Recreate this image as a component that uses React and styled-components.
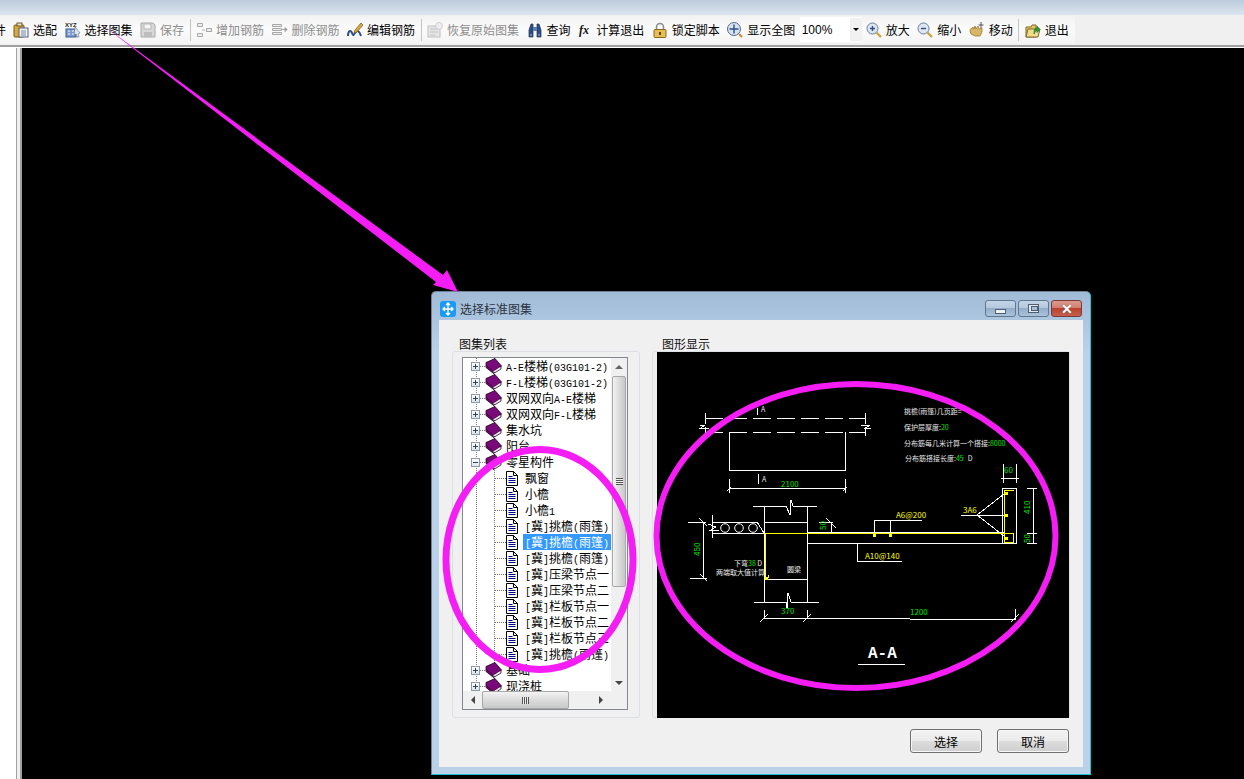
import React from 'react';
import styled, { createGlobalStyle } from 'styled-components';

const GlobalStyle = createGlobalStyle`
html, body {
 margin:0;
 padding:0;
 background:#000;
}
* {
 box-sizing:border-box;
}
`;

const cjk = `"Noto Sans CJK SC", "Liberation Sans", sans-serif`;

const Page = styled.div`
width:1244px;
height:779px;
position:relative;
overflow:hidden;
display:flex;
flex-direction:column;
font-family:${cjk};
font-size:12px;
color:#000;
background:#f0f0f0;
`;
const TopStrip = styled.div`
height:15px;
flex:none;
background:linear-gradient(#bccbdc,#dbe5ef);
`;
const ToolRow = styled.div`
height:30px;
flex:none;
background:#f0f0f0;
`;
const Toolbar = styled.div`
width:1075px;
height:29px;
padding-left:9px;
display:flex;
align-items:center;
overflow:hidden;
background:linear-gradient(#f1f1f1,#fbfbfb 45%,#f4f4f4);
`;
const CutText = styled.span`
margin:0 3px 0 -15px;
width:12px;
flex:none;
line-height:16px;
`;
const ToolButton = styled.div`
display:flex;
align-items:center;
flex:none;
height:24px;
padding:0 3.5px 0 4px;
color:${p => (p.$off ? '#8d8d8d' : '#000')};
white-space:nowrap;
`;
const ToolIcon = styled.svg`
width:16px;
height:16px;
margin-right:${p => (p.$tight ? 2 : 4)}px;
flex:none;
`;
const ToolSep = styled.div`
width:1px;
height:22px;
margin:0 1.5px 0 2px;
background:#c4c4c4;
flex:none;
`;
const Combo = styled.div`
width:62px;
height:25px;
margin:0 0 0 1px;
padding-left:2px;
display:flex;
align-items:center;
justify-content:space-between;
background:#fff;
flex:none;
font-family:"Liberation Sans", sans-serif;
`;
const ComboArrow = styled.div`
width:12px;
height:23px;
background:#f1f1f1;
display:flex;
align-items:center;
justify-content:center;
&::after {
 content:'';
 border-left:3px solid transparent;
 border-right:3px solid transparent;
 border-top:3px solid #000;
}
`;
const ToolRule = styled.div`
height:3px;
flex:none;
background:linear-gradient(#a0a0a0 0 2px,#fff 2px);
`;
const Workspace = styled.div`
flex:1;
display:flex;
background:#f0f0f0;
`;
const SidePane = styled.div`
width:17px;
background:#fff;
border-right:1px solid #a0a0a0;
`;
const CadArea = styled.div`
flex:1;
margin-left:3px;
background:#000;
border-left:2px solid #a0a0a0;
`;

const Dialog = styled.div`
position:absolute;
left:431px;
top:291px;
width:660px;
height:484px;
padding:0 7px 7px;
display:flex;
flex-direction:column;
border-radius:5px 5px 0 0;
background:linear-gradient(#a1bbd7,#b9d2ea 60px);
border:1px solid #6d8297;
border-right-color:#19c4d6;
border-bottom-color:#19c4d6;
`;
const TitleBar = styled.div`
height:28px;
flex:none;
margin-left:1px;
padding:5px 1px 0 0;
display:flex;
align-items:center;
`;
const TitleIcon = styled.svg`
width:16px;
height:16px;
margin-right:4px;
`;
const TitleText = styled.span`
flex:1;
color:#2c3440;
line-height:16px;
`;
const WinButton = styled.div`
width:31px;
height:17px;
margin-left:2px;
border:1px solid ${p => (p.$close ? '#7a3a3a' : '#62768c')};
border-radius:3px;
display:flex;
align-items:center;
justify-content:center;
background:${p => (p.$close
  ? 'linear-gradient(#dd9a8d,#d07f71 45%,#b9402e 50%,#c4604c)'
  : 'linear-gradient(#c3d5e8,#b5c9de 45%,#94aec9 50%,#aac3dc)')};
`;
const MinGlyph = styled.div`
width:11px;
height:5px;
margin-top:5px;
background:#eef3f8;
border:1px solid #4e5f72;
`;
const MaxGlyph = styled.div`
width:11px;
height:9px;
background:#dfe8f1;
border:1px solid #4e5f72;
&::after {
 content:'';
 display:block;
 width:5px;
 height:3px;
 margin:1px 2px;
 background:#a9bfd6;
 border:1px solid #4e5f72;
}
`;
const CloseGlyph = styled.span`
color:#fff;
font:bold 14px/14px "Liberation Sans", sans-serif;
text-shadow:0 0 1px #444;
`;
const DialogBody = styled.div`
flex:1;
padding:31px 14px 0 13px;
display:flex;
flex-direction:column;
background:#f0f0f0;
`;
const Panels = styled.div`
display:flex;
gap:12px;
height:367px;
flex:none;
`;
const Group = styled.div`
position:relative;
width:${p => p.$w}px;
flex:none;
padding:${p => p.$pad};
border:1px solid #dcdfe4;
border-radius:3px;
`;
const Legend = styled.span`
position:absolute;
left:${p => p.$left}px;
top:-16px;
line-height:16px;
padding:0 1px;
color:#111;
`;
const TreeBox = styled.div`
width:166px;
height:353px;
display:grid;
grid-template-columns:148px 16px;
grid-template-rows:333px 18px;
border:1px solid #828790;
background:#fff;
`;
const TreeList = styled.div`
overflow:hidden;
background-image:
 linear-gradient(#777 50%,transparent 50%),
 linear-gradient(#777 50%,transparent 50%);
background-size:1px 2px, 1px 2px;
background-repeat:repeat-y, repeat-y;
background-position:13px 0, 31px 0;
`;
const TreeRow = styled.div`
height:16px;
display:flex;
align-items:center;
padding-left:${p => (p.$child ? 31 : 8)}px;
white-space:nowrap;
line-height:16px;
`;
const Expander = styled.span`
width:9px;
height:9px;
flex:none;
position:relative;
border:1px solid #8e9aa8;
background:linear-gradient(#fff,#dfe3ea);
&::before {
 content:'';
 position:absolute;
 left:1px;
 top:3px;
 width:5px;
 height:1px;
 background:#2a3f7a;
}
&::after {
 content:'';
 display:${p => (p.$open ? 'none' : 'block')};
 position:absolute;
 left:3px;
 top:1px;
 width:1px;
 height:5px;
 background:#2a3f7a;
}
`;
const Dots = styled.span`
width:${p => p.$w}px;
flex:none;
border-bottom:1px dotted #777;
`;
const Label = styled.span`
margin-left:${p => p.$gap}px;
padding:0 2px;
height:16px;
color:${p => (p.$on ? '#fff' : '#000')};
background:${p => (p.$on ? '#3399ff' : 'transparent')};
`;
const Latin = styled.span`
font-family:"Liberation Mono", monospace;
font-size:10px;
`;
const VScroll = styled.div`
display:flex;
flex-direction:column;
background:#f0f0f0;
`;
const HScroll = styled.div`
display:flex;
align-items:center;
padding-right:1px;
background:#f0f0f0;
`;
const ScrollCorner = styled.div`
background:#f0f0f0;
`;
const ScrollEnd = styled.div`
flex:none;
width:${p => (p.$w ? `${p.$w}px` : '100%')};
height:${p => (p.$w ? '100%' : '17px')};
display:flex;
align-items:center;
justify-content:center;
`;
const Thumb = styled.div`
flex:none;
background:linear-gradient(${p => (p.$h ? 'to bottom' : 'to right')},#f2f2f2,#dcdcdc 50%,#c8c8c8);
border:1px solid #a8a8a8;
border-radius:2px;
display:flex;
align-items:center;
justify-content:center;
${p => (p.$h ? 'width:87px;height:100%;' : 'height:211px;margin:1px 1px 0;')}
`;
const Grip = styled.div`
width:7px;
height:7px;
background:${p => (p.$h
  ? 'repeating-linear-gradient(to right,#555 0 1px,#eee 1px 2px)'
  : 'repeating-linear-gradient(to bottom,#555 0 1px,#eee 1px 2px)')};
`;
const TrackFill = styled.div`
flex:1;
`;
const Arrow = styled.span`
width:0;
height:0;
${p => p.$dir === 'up' && 'border-left:4px solid transparent;border-right:4px solid transparent;border-bottom:4px solid #666;'}
${p => p.$dir === 'down' && 'border-left:4px solid transparent;border-right:4px solid transparent;border-top:4px solid #444;'}
${p => p.$dir === 'left' && 'border-top:4px solid transparent;border-bottom:4px solid transparent;border-right:4px solid #444;'}
${p => p.$dir === 'right' && 'border-top:4px solid transparent;border-bottom:4px solid transparent;border-left:4px solid #444;'}
`;
const CadCanvas = styled.svg`
display:block;
width:412px;
height:366px;
background:#000;
`;
const CadText = styled.text`
font-family:${cjk};
font-size:${p => p.$size || 7}px;
fill:${p => p.$fill || '#e8e8e8'};
`;
const CadTitle = styled.text`
font-family:"Liberation Mono", monospace;
font-weight:bold;
font-size:16px;
fill:#fff;
`;
const Footer = styled.div`
display:flex;
justify-content:flex-end;
gap:15px;
margin-top:11px;
`;
const PushButton = styled.div`
width:72px;
height:24px;
border:1px solid #707070;
border-radius:3px;
display:flex;
align-items:center;
justify-content:center;
background:linear-gradient(#f3f3f3,#ebebeb 50%,#dcdcdc 52%,#cfcfcf);
box-shadow:inset 0 0 0 1px #f6f6f6;
`;
const Overlay = styled.svg`
position:absolute;
left:0;
top:0;
width:1244px;
height:779px;
pointer-events:none;
`;

const icons = {
 clip: <><rect x="1" y="3" width="10" height="12" rx="1" fill="#d9a83a" stroke="#7a5a16" /><rect x="4" y="1" width="5" height="3" fill="#e8e2c8" stroke="#6b5a2a" /><rect x="6" y="6" width="9" height="9" fill="#eef1f6" stroke="#52627e" /><path d="M8 9h5M8 11h5M8 13h5" stroke="#7d8aa3" /></>,
 xyz: <><text x="0" y="5" fontSize="6" fontWeight="bold" fontFamily="Liberation Sans" fill="#222">XYZ</text><rect x="1" y="7" width="10" height="8" fill="#7f9ed0" stroke="#3c5a8c" /><path d="M3 9h2M7 9h2M3 12h2M7 12h2" stroke="#fff" /><path d="M10 5l5 6-2 1 1 3-2 0-1-3-2 1z" fill="#dfe7f2" stroke="#5a6a80" strokeWidth=".6" /></>,
 save: <><path d="M1 1h12l2 2v12H1z" fill="#d8d8d8" stroke="#a8a8a8" /><rect x="4" y="2" width="7" height="5" fill="#f4f4f4" stroke="#b8b8b8" /><rect x="4" y="10" width="8" height="5" fill="#bdbdbd" /></>,
 add: <g stroke="#a8a8a8" fill="#eee"><path d="M1.500 1.500h5v3h-5zM1.500 11.500h5v3h-5z" /><path d="M6 8h3" /><rect x="10.500" y="6.500" width="5" height="3" /></g>,
 del: <g stroke="#a8a8a8" fill="#eee"><path d="M.5 2.500h9v2h-9zM.5 6.500h9v2h-9zM.5 10.500h9v2h-9z" /><path d="M10 7.500h5" /><path d="M15 7.500l-2-2v4z" fill="#888" /></g>,
 edit: <><path d="M1 14c0-6 3-6 4-3s1 3 3 0 4-3 6 3" fill="none" stroke="#2d4f8a" strokeWidth="2" /><path d="M8 8l6-7 2 2-6 7-3 1z" fill="#d9a83a" stroke="#6f5a20" strokeWidth=".7" /></>,
 restore: <><rect x="1" y="4" width="12" height="11" fill="#e6e6e6" stroke="#c0c0c0" /><path d="M3 7h8M3 10h8M3 13h5" stroke="#c4c4c4" /><circle cx="12" cy="4" r="3.500" fill="#ededed" stroke="#cfcfcf" /></>,
 binoc: <><path d="M2 15V8l2-6h2v13zM14 15V8l-2-6h-2v13z" fill="#2f4d86" stroke="#1f3358" strokeWidth=".7" /><rect x="6" y="5" width="4" height="4" fill="#5d7fb8" /><path d="M3 13h2M11 13h2" stroke="#a9c2e6" /></>,
 fx: <text x="1" y="12" fontSize="12" fontStyle="italic" fontWeight="bold" fontFamily="Liberation Serif" fill="#111">fx</text>,
 lock: <><path d="M4.500 8V5a3.500 3.500 0 0 1 7 0v3" fill="none" stroke="#8c8c8c" strokeWidth="1.600" /><rect x="2" y="7.500" width="12" height="8" rx="1" fill="#e7bd55" stroke="#8a6a1e" /><rect x="7" y="10" width="2" height="3" fill="#5f4710" /></>,
 zoomAll: <><circle cx="7" cy="7" r="6.500" fill="#d6e2f2" stroke="#566a8c" /><path d="M7 2.500v9M2.500 7h9" stroke="#2d4f8a" strokeWidth="1.400" /><path d="M12 12l3 3" stroke="#c9882a" strokeWidth="2" /></>,
 zoomIn: <><circle cx="6.500" cy="6.500" r="5.500" fill="#dce6f2" stroke="#6a7c98" /><path d="M4 6.500h5M6.500 4v5" stroke="#33507f" strokeWidth="1.400" /><path d="M10.500 10.500l4.500 4.500" stroke="#c9a03a" strokeWidth="2.200" /></>,
 zoomOut: <><circle cx="6.500" cy="6.500" r="5.500" fill="#dce6f2" stroke="#6a7c98" /><path d="M4 6.500h5" stroke="#33507f" strokeWidth="1.400" /><path d="M10.500 10.500l4.500 4.500" stroke="#c9a03a" strokeWidth="2.200" /></>,
 hand: <><path d="M1 9c0-2 1-3 2-2l1-2 1 2 1-3 1 3 2-3 1 3 3-1v4l-2 4H6L2 12z" fill="#d8b668" stroke="#9a7a38" strokeWidth=".8" /><path d="M12 0v6M9.500 3h5" stroke="#555" /></>,
 exit: <><path d="M1 5h5l1-2h4v12H1z" fill="#e5c860" stroke="#80662a" /><path d="M1 15l2-8h12l-2 8z" fill="#f1de8c" stroke="#80662a" /><path d="M9 12c0-5 1-6 3-6V4l3 3.500-3 3V8.500c-1 0-2 1-3 3.500z" fill="#2f9a3a" stroke="#1d6a25" strokeWidth=".6" /></>,
};

const Tool = ({ icon, off, tight, children }) => (
 <ToolButton $off={off}>
  <ToolIcon viewBox="0 0 16 16" $tight={tight}>{icons[icon]}</ToolIcon>
  {children}
 </ToolButton>
);

const BookIcon = () => (
 <svg width="17" height="16" viewBox="0 0 17 16" style={{ flex: 'none' }}>
  <path d="M1 4.500L10 .5l6.500 7.500-8 5.500v2L1 9.500z" fill="#7a0a7a" stroke="#1c061c" strokeWidth=".8" />
  <path d="M1.500 8l7 5.500 7.500-5" fill="none" stroke="#2c0a2c" strokeWidth=".8" />
  <path d="M8.500 14l7-4.500" stroke="#e8e8e8" strokeWidth="1.200" />
  <path d="M8.500 15.500l7.500-4.500v-3" fill="none" stroke="#1c061c" strokeWidth=".8" />
 </svg>
);

const DocIcon = () => (
 <svg width="12" height="15" viewBox="0 0 12 15" style={{ flex: 'none' }}>
  <path d="M.5.500h7l4 4v10H.5z" fill="#fff" stroke="#000" />
  <path d="M7.500.500v4h4" fill="none" stroke="#000" />
  <path d="M2.500 5.500h4M2.500 7.500h7M2.500 9.500h7M2.500 11.500h7" stroke="#000080" />
 </svg>
);

// half width characters get the mono font, the rest stays on the CJK font
const Mixed = ({ text }) => text.split(/([\x20-\x7e]+)/).map((part, i) =>
 i % 2 ? <Latin key={i}>{part}</Latin> : part
);

const roots = ['A-E楼梯(03G101-2)', 'F-L楼梯(03G101-2)', '双网双向A-E楼梯', '双网双向F-L楼梯', '集水坑', '阳台'];
const parts = [
 '飘窗', '小檐', '小檐1', '[冀]挑檐(雨篷)', '[冀]挑檐(雨篷)', '[冀]挑檐(雨篷)', '[冀]压梁节点一', '[冀]压梁节点二',
 '[冀]栏板节点一', '[冀]栏板节点二', '[冀]栏板节点三', '[冀]挑檐(雨篷)',
];

const RootRow = ({ text, open }) => (
 <TreeRow>
  <Expander $open={open} />
  <Dots $w={5} />
  <BookIcon />
  <Label $gap={2}><Mixed text={text} /></Label>
 </TreeRow>
);

const white = [
 'M705 418h160M705 432h160',
 'M705 413v11M705 427v9M865 413v11M865 427v9',
 'M700 425h5l-4 3h8M861 425h9l-4 3h5',
 'M729 432v38h116v-38',
 'M757 408v7M758 474v10',
 'M729 488h116M729 479v14M845 479v14M727 491l4-4M843 491l4-4',
 'M753 506h33l4 9 1-15 2 6h24',
 'M764 506v96M807 506v96',
 'M764 522h43M765 579h42',
 'M754 602h32l1 6 1-15 3 9h28',
 'M713 522h44M713 533h51M712 515v23M708 524l8 3-5 3 8 0M757 522l7 11',
 'M688 522h18M703 522v56M690 578h17M699 518l8 8M700 574l7 7',
 'M819 522h14M831 522v12M826 518l10 10',
 'M807 532h198M807 543h209',
 'M857 543v18h45',
 'M874 520h48M874 520v13M890 520v13',
 'M1002 488h14v55h-14z',
 'M961 515h16M977 515l27-21M977 515h27M977 515l27 21',
 'M1003 464v19M1016 464v19M1001 478h18',
 'M1033 488v55M1027 488h10M1027 533h10M1027 543h10',
 'M764 618h146M910 619h105M764 610v9M807 610v9M1015 609v11M760 622l8-8M803 622l8-8M1011 622l8-8',
 'M858 664h47',
];
const yellow = [
 'M765 533h239M765 533v44M1004 533V490h10',
 'M1004 533h9v9h-9z',
 'M765 577h3v-2',
];
const dots = [[874, 535], [890, 535], [1006, 493], [1006, 515], [1006, 538], [766, 578]];
const rings = [725, 739, 753];

const CadDrawing = () => (
 <CadCanvas viewBox="657 352 412 366">
  <g fill="none" stroke="#fff" strokeWidth="1" shapeRendering="crispEdges">
   {white.map((d, i) => <path key={i} d={d} strokeDasharray={i === 0 ? '18 6' : undefined} />)}
  </g>
  <g fill="none" stroke="#fff" strokeWidth="1">
   {rings.map(x => <circle key={x} cx={x} cy="528" r="4.300" />)}
  </g>
  <g fill="none" stroke="#ffff00" strokeWidth="1" shapeRendering="crispEdges">
   {yellow.map((d, i) => <path key={i} d={d} />)}
  </g>
  {dots.map(([x, y]) => <rect key={x + '-' + y} x={x - 1} y={y - 1} width="3" height="3" fill="#ffff00" />)}
  <CadText x="761" y="412">A</CadText>
  <CadText x="762" y="482">A</CadText>
  <CadText x="781" y="487" $size={8} $fill="#00e000">2100</CadText>
  <CadText x="904" y="414">挑檐(雨篷)几页距=</CadText>
  <CadText x="904" y="430">保护层厚度:<tspan fill="#00e000">20</tspan></CadText>
  <CadText x="904" y="446">分布筋每几米计算一个搭接:<tspan fill="#00e000">8000</tspan></CadText>
  <CadText x="905" y="461">分布筋搭接长度:<tspan fill="#00e000">45</tspan><tspan dx="4">D</tspan></CadText>
  <CadText x="1004" y="473" $size={8} $fill="#00e000">60</CadText>
  <CadText x="963" y="513" $size={8} $fill="#ffff00">3A6</CadText>
  <CadText x="896" y="518" $size={8} $fill="#ffff00">A6@200</CadText>
  <CadText x="865" y="559" $size={8} $fill="#ffff00">A10@140</CadText>
  <CadText x="734" y="566">下弯<tspan fill="#00e000">38</tspan> D</CadText>
  <CadText x="716" y="575">两端取大值计算</CadText>
  <CadText x="787" y="572">圆梁</CadText>
  <CadText x="781" y="614" $size={8} $fill="#00e000">370</CadText>
  <CadText x="910" y="615" $size={8} $fill="#00e000">1200</CadText>
  <CadText transform="translate(700 556) rotate(-90)" $size={8} $fill="#00e000">450</CadText>
  <CadText transform="translate(826 530) rotate(-90)" $size={8} $fill="#00e000">50</CadText>
  <CadText transform="translate(1030 514) rotate(-90)" $size={8} $fill="#00e000">410</CadText>
  <CadText transform="translate(1030 543) rotate(-90)" $size={8} $fill="#00e000">50</CadText>
  <CadTitle x="868" y="658">A-A</CadTitle>
 </CadCanvas>
);

function App() {
 return (
  <Page>
   <GlobalStyle />
   <TopStrip />
   <ToolRow>
    <Toolbar>
     <CutText>件</CutText>
     <Tool icon="clip">选配</Tool>
     <Tool icon="xyz">选择图集</Tool>
     <Tool icon="save" off>保存</Tool>
     <ToolSep />
     <Tool icon="add" off>增加钢筋</Tool>
     <Tool icon="del" off>删除钢筋</Tool>
     <Tool icon="edit">编辑钢筋</Tool>
     <ToolSep />
     <Tool icon="restore" off>恢复原始图集</Tool>
     <Tool icon="binoc">查询</Tool>
     <Tool icon="fx" tight>计算退出</Tool>
     <Tool icon="lock">锁定脚本</Tool>
     <Tool icon="zoomAll">显示全图</Tool>
     <Combo>100%<ComboArrow /></Combo>
     <Tool icon="zoomIn">放大</Tool>
     <Tool icon="zoomOut">缩小</Tool>
     <Tool icon="hand">移动</Tool>
     <ToolSep />
     <Tool icon="exit">退出</Tool>
    </Toolbar>
   </ToolRow>
   <ToolRule />
   <Workspace>
    <SidePane />
    <CadArea />
   </Workspace>

   <Dialog>
    <TitleBar>
     <TitleIcon viewBox="0 0 16 16">
      <rect width="16" height="16" rx="3" fill="#1b9af5" />
      <path d="M8 2v12M3 8h10M6 4l2-2 2 2M6 12l2 2 2-2M5 6L3 8l2 2M11 6l2 2-2 2" stroke="#fff" strokeWidth="1.300" fill="none" />
     </TitleIcon>
     <TitleText>选择标准图集</TitleText>
     <WinButton><MinGlyph /></WinButton>
     <WinButton><MaxGlyph /></WinButton>
     <WinButton $close><CloseGlyph>✕</CloseGlyph></WinButton>
    </TitleBar>
    <DialogBody>
     <Panels>
      <Group $w={188} $pad="5px 9px">
       <Legend $left={5}>图集列表</Legend>
       <TreeBox>
        <TreeList>
         {roots.map(text => <RootRow key={text} text={text} />)}
         <RootRow text="零星构件" open />
         {parts.map((text, i) => (
          <TreeRow key={i} $child>
           <Dots $w={12} />
           <DocIcon />
           <Label $gap={5} $on={i === 4}><Mixed text={text} /></Label>
          </TreeRow>
         ))}
         <RootRow text="基础" />
         <RootRow text="现浇桩" />
        </TreeList>
        <VScroll>
         <ScrollEnd><Arrow $dir="up" /></ScrollEnd>
         <Thumb><Grip /></Thumb>
         <TrackFill />
         <ScrollEnd><Arrow $dir="down" /></ScrollEnd>
        </VScroll>
        <HScroll>
         <ScrollEnd $w={19}><Arrow $dir="left" /></ScrollEnd>
         <Thumb $h><Grip $h /></Thumb>
         <TrackFill />
         <ScrollEnd $w={19}><Arrow $dir="right" /></ScrollEnd>
        </HScroll>
        <ScrollCorner />
       </TreeBox>
      </Group>
      <Group $w={418} $pad="0 0 0 4px">
       <Legend $left={8}>图形显示</Legend>
       <CadDrawing />
      </Group>
     </Panels>
     <Footer>
      <PushButton>选择</PushButton>
      <PushButton>取消</PushButton>
     </Footer>
    </DialogBody>
   </Dialog>

   <Overlay viewBox="0 0 1244 779">
    <polygon points="100,23 443,275 447,270 458,292 433,285 436,282" fill="#f41ef4" />
    <ellipse cx="539.500" cy="559.500" rx="93.500" ry="110" fill="none" stroke="#f41ef4" strokeWidth="7" />
    <ellipse cx="856" cy="536" rx="199.500" ry="152" fill="none" stroke="#f41ef4" strokeWidth="6" />
   </Overlay>
  </Page>
 );
}

export default App;
